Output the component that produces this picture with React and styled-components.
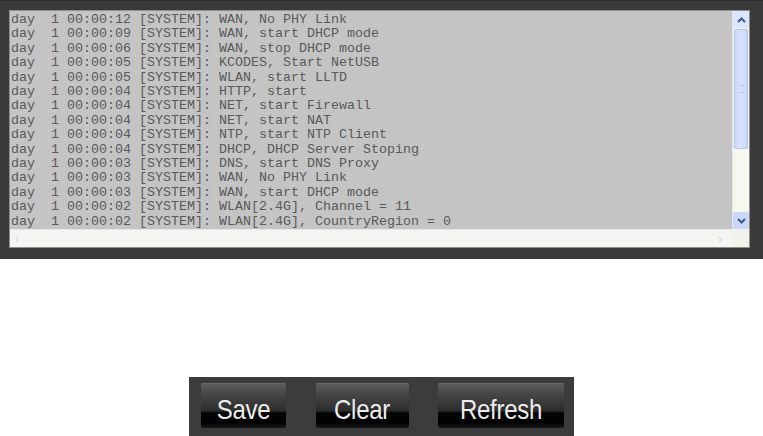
import React from 'react';
import styled, { createGlobalStyle } from 'styled-components';

const logLines = [
    'day  1 00:00:12 [SYSTEM]: WAN, No PHY Link',
    'day  1 00:00:09 [SYSTEM]: WAN, start DHCP mode',
    'day  1 00:00:06 [SYSTEM]: WAN, stop DHCP mode',
    'day  1 00:00:05 [SYSTEM]: KCODES, Start NetUSB',
    'day  1 00:00:05 [SYSTEM]: WLAN, start LLTD',
    'day  1 00:00:04 [SYSTEM]: HTTP, start',
    'day  1 00:00:04 [SYSTEM]: NET, start Firewall',
    'day  1 00:00:04 [SYSTEM]: NET, start NAT',
    'day  1 00:00:04 [SYSTEM]: NTP, start NTP Client',
    'day  1 00:00:04 [SYSTEM]: DHCP, DHCP Server Stoping',
    'day  1 00:00:03 [SYSTEM]: DNS, start DNS Proxy',
    'day  1 00:00:03 [SYSTEM]: WAN, No PHY Link',
    'day  1 00:00:03 [SYSTEM]: WAN, start DHCP mode',
    'day  1 00:00:02 [SYSTEM]: WLAN[2.4G], Channel = 11',
    'day  1 00:00:02 [SYSTEM]: WLAN[2.4G], CountryRegion = 0',
];

function Chevron({ down }) {
    // small arrow used on the scrollbar buttons
    return (
        <svg width="9" height="6" viewBox="0 0 9 6">
            <path
                d={down ? 'M1 1 L4.5 4.5 L8 1' : 'M1 5 L4.5 1.5 L8 5'}
                fill="none"
                stroke="#3b5a8c"
                strokeWidth="2"
            />
        </svg>
    );
}

function App() {
    return (
        <>
            <GlobalStyle />
            <LogPanel>
                <LogBox>
                    <LogText>
                        {logLines.map((line, i) => (
                            <Line key={i}>{line}</Line>
                        ))}
                    </LogText>
                    <VScroll>
                        <ArrowBtn>
                            <Chevron />
                        </ArrowBtn>
                        <Thumb>
                            <Grip />
                        </Thumb>
                        <Track />
                        <ArrowBtn filled>
                            <Chevron down />
                        </ArrowBtn>
                    </VScroll>
                    <HScroll>
                        <HArrow>‹</HArrow>
                        <HArrow>›</HArrow>
                    </HScroll>
                    <Corner />
                </LogBox>
            </LogPanel>

            <ButtonBar>
                <Button width={85}><Label>Save</Label></Button>
                <Button width={93}><Label>Clear</Label></Button>
                <Button width={126}><Label>Refresh</Label></Button>
            </ButtonBar>
        </>
    );
}

export default App;

const GlobalStyle = createGlobalStyle`
    html, body {
        margin: 0;
        padding: 0;
        background: #ffffff;
        overflow: hidden;
    }
    body {
        font-family: "Liberation Sans", Arial, sans-serif;
    }
`;

const LogPanel = styled.div`
    width: 763px;
    height: 259px;
    box-sizing: border-box;
    padding: 9px 13px 11px 9px;
    background: #3a3a3a;
    border-top: 1px solid #2e2e2e;
`;

const LogBox = styled.div`
    display: grid;
    grid-template-columns: 1fr 17px;
    grid-template-rows: 1fr 18px;
    height: 100%;
    box-sizing: border-box;
    border: 1px solid #8e8e8e;
    background: #c4c4c4;
`;

const LogText = styled.div`
    padding: 2px 0 0 1px;
    overflow: hidden;
    font-family: "Liberation Mono", "Courier New", monospace;
    font-size: 13.33px;
    line-height: 14.4px;
    color: #5a5a5a;
`;

const Line = styled.div`
    white-space: pre;
`;

const VScroll = styled.div`
    display: flex;
    flex-direction: column;
    background: #f1f3ef;
    border-left: 1px solid #e2e6ee;
`;

const ArrowBtn = styled.div`
    height: 17px;
    display: flex;
    align-items: center;
    justify-content: center;
    background: ${props => (props.filled ? '#c9d8f6' : '#dce6fa')};
    border-radius: 2px;
`;

const Thumb = styled.div`
    height: 118px;
    margin: 1px 1px 0;
    display: flex;
    align-items: center;
    justify-content: center;
    background: linear-gradient(to right, #cad9f8, #d9e4fb 50%, #c6d5f5);
    border: 1px solid #b4c6ec;
    border-radius: 2px;
`;

const Grip = styled.div`
    width: 5px;
    height: 6px;
    border-top: 1px solid #b9c9ea;
    border-bottom: 1px solid #b9c9ea;
`;

const Track = styled.div`
    flex: 1;
    background: #f6f7ee;
`;

const HScroll = styled.div`
    display: flex;
    align-items: center;
    justify-content: space-between;
    padding: 0 10px 0 5px;
    background: #f4f4f2;
    border-top: 1px solid #e6e6e6;
`;

const HArrow = styled.span`
    font-size: 12px;
    color: #cfd3d6;
`;

const Corner = styled.div`
    background: #f1f2ea;
`;

const ButtonBar = styled.div`
    width: 385px;
    height: 59px;
    margin: 118px auto 0;
    box-sizing: border-box;
    padding: 6px 10px 0 12px;
    display: flex;
    justify-content: space-between;
    background: #3c3c3c;
`;

const Button = styled.div`
    width: ${props => props.width}px;
    height: 45px;
    box-sizing: border-box;
    display: flex;
    align-items: flex-end;
    justify-content: center;
    padding-bottom: 2px;
    color: #ececec;
    font-size: 24px;
    letter-spacing: -0.3px;
    background: linear-gradient(
        to bottom,
        #5e5e5e 0%,
        #4a4a4a 20%,
        #2c2c2c 62%,
        #060606 66%,
        #000000 88%,
        #1a1a1a 100%
    );
    box-shadow: inset 0 1px 0 #6a6a6a;
    border-radius: 2px;
    cursor: pointer;
`;

const Label = styled.span`
    display: inline-block;
    transform: scaleY(1.12);
    transform-origin: bottom;
`;
